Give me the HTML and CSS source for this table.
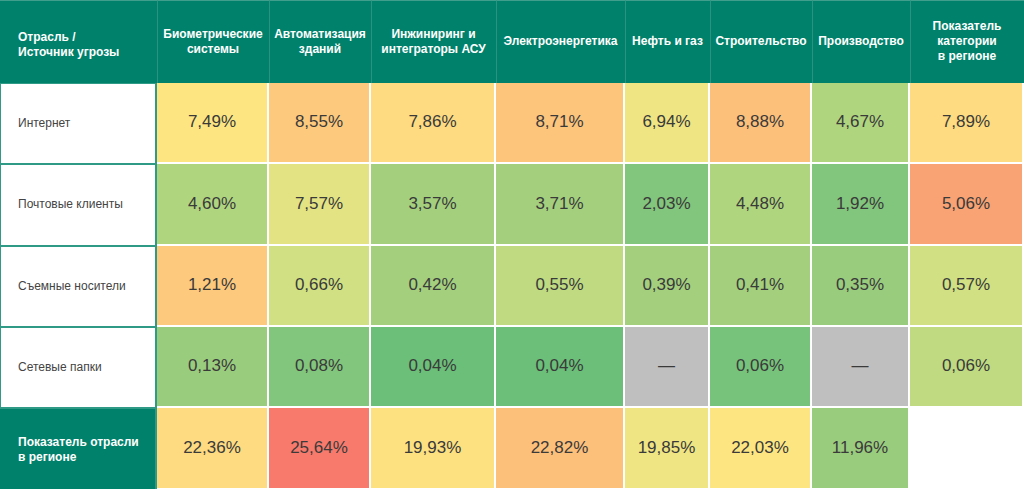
FILE: index.html
```html
<!DOCTYPE html>
<html lang="ru">
<head>
<meta charset="utf-8">
<title>Источники угроз</title>
<link rel="stylesheet" href="styles.css">
</head>
<body>
<div class="grid">
  <div class="h h-first">Отрасль /<br>Источник угрозы</div>
  <div class="h">Биометрические<br>системы</div>
  <div class="h">Автоматизация<br>зданий</div>
  <div class="h">Инжиниринг и<br>интеграторы АСУ</div>
  <div class="h">Электроэнергетика</div>
  <div class="h">Нефть и газ</div>
  <div class="h">Строительство</div>
  <div class="h">Производство</div>
  <div class="h">Показатель<br>категории<br>в регионе</div>

  <div class="lbl">Интернет</div>
  <div class="c c-y1">7,49%</div>
  <div class="c c-o1">8,55%</div>
  <div class="c c-y2">7,86%</div>
  <div class="c c-o2">8,71%</div>
  <div class="c c-ly">6,94%</div>
  <div class="c c-o3">8,88%</div>
  <div class="c c-g1">4,67%</div>
  <div class="c c-y2">7,89%</div>

  <div class="lbl">Почтовые клиенты</div>
  <div class="c c-g1">4,60%</div>
  <div class="c c-yg">7,57%</div>
  <div class="c c-g2">3,57%</div>
  <div class="c c-g2">3,71%</div>
  <div class="c c-g4">2,03%</div>
  <div class="c c-g1">4,48%</div>
  <div class="c c-g4">1,92%</div>
  <div class="c c-r1">5,06%</div>

  <div class="lbl">Съемные носители</div>
  <div class="c c-o1">1,21%</div>
  <div class="c c-yg2">0,66%</div>
  <div class="c c-g2">0,42%</div>
  <div class="c c-gy">0,55%</div>
  <div class="c c-g2">0,39%</div>
  <div class="c c-g2">0,41%</div>
  <div class="c c-g3">0,35%</div>
  <div class="c c-yg2">0,57%</div>

  <div class="lbl">Сетевые папки</div>
  <div class="c c-g3">0,13%</div>
  <div class="c c-g4">0,08%</div>
  <div class="c c-g5">0,04%</div>
  <div class="c c-g5">0,04%</div>
  <div class="c c-na">—</div>
  <div class="c c-g5b">0,06%</div>
  <div class="c c-na">—</div>
  <div class="c c-gy">0,06%</div>

  <div class="h-foot">Показатель отрасли<br>в регионе</div>
  <div class="c c-y2">22,36%</div>
  <div class="c c-r2">25,64%</div>
  <div class="c c-y3">19,93%</div>
  <div class="c c-o3">22,82%</div>
  <div class="c c-ly">19,85%</div>
  <div class="c c-y1">22,03%</div>
  <div class="c c-g3">11,96%</div>
  <div class="c c-empty"></div>
</div>
</body>
</html>
```

FILE: styles.css
```css
html, body {
  margin: 0;
  padding: 0;
  background: #ffffff;
}

body {
  font-family: "Liberation Sans", Arial, sans-serif;
}

.grid {
  display: grid;
  grid-template-columns: 157px 112px 102px 125px 129px 85px 102px 98px 1fr;
  grid-template-rows: 83px 81px 82px 81px 81px 82px;
  width: 1024px;
  height: 489px;
  overflow: hidden;
}

.h {
  background: #00816b;
  color: #ffffff;
  font-weight: bold;
  font-size: 12px;
  line-height: 15px;
  display: flex;
  align-items: center;
  justify-content: center;
  text-align: center;
  border-top: 1px solid #3f9f8c;
  border-left: 1px solid #2b927d;
  padding-bottom: 1px;
  padding-right: 1px;
}

.h-first {
  justify-content: flex-start;
  text-align: left;
  padding-left: 18px;
  padding-top: 6px;
  border-left: none;
}

.lbl {
  background: #ffffff;
  color: #444444;
  font-size: 12px;
  display: flex;
  align-items: center;
  padding-left: 17px;
  padding-bottom: 2px;
  border: 1px solid #2f9a85;
  border-width: 1px 2px 1px 1px;
}

.h-foot {
  background: #00816b;
  color: #ffffff;
  font-weight: bold;
  font-size: 12px;
  line-height: 15px;
  display: flex;
  align-items: center;
  padding-left: 18px;
  border-right: 2px solid #2f9a85;
  border-top: 1px solid #2f9a85;
}

.c {
  display: flex;
  align-items: center;
  justify-content: center;
  font-size: 17px;
  color: #3a3a3a;
  padding-bottom: 1px;
  border-right: 2px solid #ffffff;
  border-bottom: 2px solid #ffffff;
}

.c-y1 { background: #fde682; }
.c-y2 { background: #fedb80; }
.c-y3 { background: #fde181; }
.c-ly { background: #efe583; }
.c-yg { background: #e3e383; }
.c-yg2 { background: #d0e082; }
.c-gy { background: #bfda81; }
.c-o1 { background: #fdc97d; }
.c-o2 { background: #fdc47c; }
.c-o3 { background: #fdc07b; }
.c-r1 { background: #f9a273; }
.c-r2 { background: #f87a6d; }
.c-g1 { background: #b0d57f; }
.c-g2 { background: #a4d07e; }
.c-g3 { background: #9acc7e; }
.c-g4 { background: #82c57c; }
.c-g5 { background: #6bbf79; }
.c-g5b { background: #78c37b; }
.c-na { background: #bfbfbf; }
.c-empty { background: #ffffff; }
```
